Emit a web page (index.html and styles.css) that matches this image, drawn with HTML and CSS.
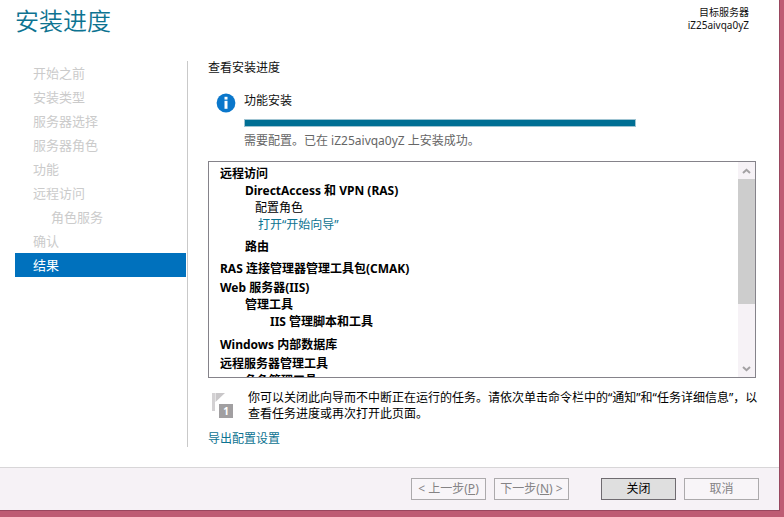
FILE: index.html
```html
<!DOCTYPE html>
<html lang="zh-CN">
<head>
<meta charset="utf-8">
<title>安装进度</title>
<link rel="stylesheet" href="styles.css">
</head>
<body>
<div class="window">
  <header class="header">
    <h1 class="title">安装进度</h1>
    <div class="target">
      <p>目标服务器</p>
      <p>iZ25aivqa0yZ</p>
    </div>
  </header>

  <div class="content">
    <nav class="steps">
      <ol>
        <li>开始之前</li>
        <li>安装类型</li>
        <li>服务器选择</li>
        <li>服务器角色</li>
        <li>功能</li>
        <li>远程访问</li>
        <li class="sub">角色服务</li>
        <li>确认</li>
        <li class="current" aria-current="step">结果</li>
      </ol>
    </nav>

    <main class="main">
      <h2 class="heading">查看安装进度</h2>

      <section class="status">
        <svg class="info" width="20" height="20" viewBox="0 0 20 20" aria-hidden="true">
          <circle cx="10" cy="10" r="9.4" fill="#0a77cb"/>
          <rect x="8.500" y="3.8" width="3" height="2.8" fill="#fff"/>
          <path d="M8.500 7.8h3v8h-3z" fill="#fff"/>
        </svg>
        <div class="status-body">
          <label for="progress">功能安装</label>
          <progress id="progress" class="progress" value="100" max="100"></progress>
          <p class="result">需要配置。已在 iZ25aivqa0yZ 上安装成功。</p>
        </div>
      </section>

      <div class="results">
        <ul class="tree">
          <li>远程访问
            <ul>
              <li>DirectAccess 和 VPN (RAS)
                <div class="detail">
                  <p>配置角色</p>
                  <a href="#wizard">打开“开始向导”</a>
                </div>
              </li>
              <li>路由</li>
            </ul>
          </li>
          <li>RAS 连接管理器管理工具包(CMAK)</li>
          <li>Web 服务器(IIS)
            <ul>
              <li>管理工具
                <ul>
                  <li>IIS 管理脚本和工具</li>
                </ul>
              </li>
            </ul>
          </li>
          <li>Windows 内部数据库</li>
          <li>远程服务器管理工具
            <ul>
              <li>角色管理工具</li>
            </ul>
          </li>
        </ul>
        <div class="scrollbar">
          <button type="button" class="arrow" aria-label="向上滚动">
            <svg width="9" height="6" viewBox="0 0 9 6"><path d="M1 5l3.5-3.2L8 5" fill="none" stroke="#a3a1a3" stroke-width="2"/></svg>
          </button>
          <div class="track"><div class="thumb"></div></div>
          <button type="button" class="arrow" aria-label="向下滚动">
            <svg width="9" height="6" viewBox="0 0 9 6"><path d="M1 1l3.5 3.2L8 1" fill="none" stroke="#a3a1a3" stroke-width="2"/></svg>
          </button>
        </div>
      </div>

      <div class="note">
        <svg class="flag" width="24" height="28" viewBox="0 0 24 28" aria-hidden="true">
          <path d="M1 3h3v18H1z" fill="#d3d1d3"/>
          <path d="M4.500 3H14l-9.500 9z" fill="#c9c7c9"/>
          <rect x="8" y="14" width="14" height="14" fill="#a19fa1"/>
          <text x="15" y="25" class="flag-count">1</text>
        </svg>
        <p>你可以关闭此向导而不中断正在运行的任务。请依次单击命令栏中的“通知”和“任务详细信息”，以查看任务进度或再次打开此页面。</p>
      </div>
      <a class="export" href="#export">导出配置设置</a>
    </main>
  </div>

  <footer class="footer">
    <button type="button" class="button" disabled>&lt; 上一步(<u>P</u>)</button>
    <button type="button" class="button" disabled>下一步(<u>N</u>) &gt;</button>
    <button type="button" class="button primary">关闭</button>
    <button type="button" class="button" disabled>取消</button>
  </footer>
</div>
</body>
</html>
```
FILE: styles.css
```css
* {
  box-sizing: border-box;
}

body {
  margin: 0;
  min-height: 100vh;
  display: flex;
  padding: 0 4px 6px 0;
  background: #be5c74;
  color: #111;
  font: 12px/16px "Noto Sans", "Noto Sans CJK SC", sans-serif;
}

h1, h2, p, ul, ol {
  margin: 0;
  padding: 0;
}

ul, ol {
  list-style: none;
}

a {
  color: #0d7391;
  text-decoration: none;
}

.window {
  flex: 1;
  min-width: 0;
  display: flex;
  flex-direction: column;
  background: #fff;
  border: solid #99485f;
  border-width: 0 1px 1px 0;
}

.header {
  display: flex;
  justify-content: space-between;
  align-items: flex-start;
  height: 61px;
  padding: 5px 30px 0 15px;
}

.title {
  color: #0d7391;
  font-size: 24px;
  font-weight: 350;
  line-height: 32px;
}

.target {
  padding-top: 1px;
  font-size: 10px;
  line-height: 13px;
  text-align: right;
}

.content {
  flex: 1;
  display: flex;
  margin-bottom: 20px;
}

.steps {
  flex: none;
  width: 188px;
  padding: 0 1px 0 15px;
  border-right: 1px solid #c9c9c9;
  color: #cbcbcb;
  font-size: 13px;
  line-height: 24px;
}

.steps li {
  padding-left: 18px;
}

.steps .sub {
  padding-left: 36px;
}

.steps .current {
  background: #0071bd;
  color: #fff;
}

.main {
  flex: 1;
  min-width: 0;
  padding: 0 19px 0 20px;
}

.heading {
  font-size: 12px;
  font-weight: normal;
  line-height: 14px;
}

.status {
  display: flex;
  gap: 8px;
  margin-top: 18px;
  padding-left: 8px;
}

.info {
  flex: none;
}

.status-body {
  flex: 1;
  display: flex;
  flex-direction: column;
}

.progress {
  appearance: none;
  width: 100%;
  max-width: 392px;
  height: 8px;
  margin: 10px 0 6px;
  border: 1px solid #9fc4d2;
  background: #fff;
}

.progress::-webkit-progress-bar {
  background: #fff;
}

.progress::-webkit-progress-value {
  background: #006f94;
}

.result {
  color: #666;
}

.results {
  display: flex;
  height: 217px;
  margin: 12px 4px 0 0;
  border: 1px solid #85838a;
  overflow: hidden;
}

.tree {
  flex: 1;
  padding: 3px 11px 0;
  color: #000;
  font-weight: bold;
  line-height: 17px;
}

.tree > li + li {
  margin-top: 2px;
}

.tree ul {
  padding: 0 0 3px 25px;
}

.tree ul ul {
  padding-bottom: 1px;
}

.detail {
  padding: 0 0 5px 10px;
  font-weight: normal;
}

.detail a {
  display: block;
  padding-left: 3px;
}

.scrollbar {
  flex: none;
  display: flex;
  flex-direction: column;
  width: 17px;
  background: #f6f2f6;
}

.arrow {
  display: flex;
  align-items: center;
  justify-content: center;
  height: 17px;
  padding: 0;
  border: 0;
  background: none;
}

.track {
  flex: 1;
}

.thumb {
  height: 69%;
  background: #cdcdcd;
}

.note {
  display: flex;
  gap: 13px;
  margin-top: 12px;
  padding-left: 3px;
  color: #000;
}

.note p {
  margin-right: -2px;
}

.flag {
  flex: none;
}

.flag-count {
  fill: #fff;
  font-size: 10px;
  font-weight: bold;
  text-anchor: middle;
}

.export {
  display: block;
  margin-top: 9px;
}

.footer {
  display: flex;
  justify-content: flex-end;
  gap: 8px;
  padding: 10px 20px;
  border-top: 1px solid #d8d6d8;
  background: #f6f2f6;
}

.button {
  width: 75px;
  height: 22px;
  padding: 0;
  border: 1px solid #acaaac;
  background: #f8f5f8;
  color: #858385;
  font: inherit;
  white-space: nowrap;
}

.primary {
  margin-left: 24px;
  border-color: #6f6b70;
  background: #dfdfdf;
  color: #000;
}
```
